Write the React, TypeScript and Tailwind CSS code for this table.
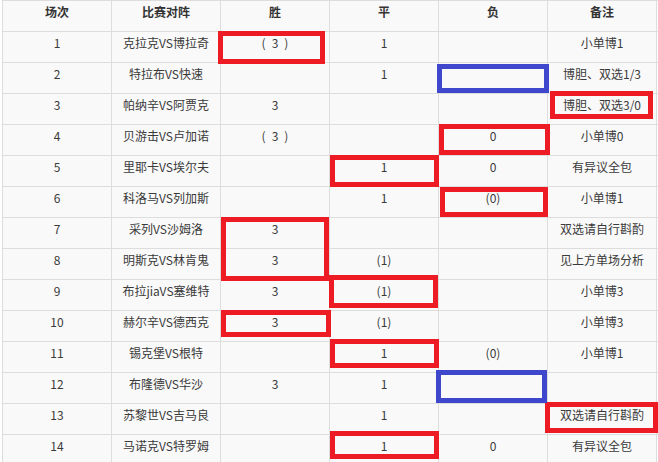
import React from 'react';

interface MatchRow {
  no: string;
  match: string;
  win: string;
  draw: string;
  lose: string;
  note: string;
}

const P3 = '(\u20023\u2002)';

const rows: MatchRow[] = [
  { no: '1', match: '克拉克VS博拉奇', win: P3, draw: '1', lose: '', note: '小单博1' },
  { no: '2', match: '特拉布VS快速', win: '', draw: '1', lose: '', note: '博胆、双选1/3' },
  { no: '3', match: '帕纳辛VS阿贾克', win: '3', draw: '', lose: '', note: '博胆、双选3/0' },
  { no: '4', match: '贝游击VS卢加诺', win: P3, draw: '', lose: '0', note: '小单博0' },
  { no: '5', match: '里耶卡VS埃尔夫', win: '', draw: '1', lose: '0', note: '有异议全包' },
  { no: '6', match: '科洛马VS列加斯', win: '', draw: '1', lose: '(0)', note: '小单博1' },
  { no: '7', match: '采列VS沙姆洛', win: '3', draw: '', lose: '', note: '双选请自行斟酌' },
  { no: '8', match: '明斯克VS林肯鬼', win: '3', draw: '(1)', lose: '', note: '见上方单场分析' },
  { no: '9', match: '布拉jiaVS塞维特', win: '3', draw: '(1)', lose: '', note: '小单博3' },
  { no: '10', match: '赫尔辛VS德西克', win: '3', draw: '(1)', lose: '', note: '小单博3' },
  { no: '11', match: '锡克堡VS根特', win: '', draw: '1', lose: '(0)', note: '小单博1' },
  { no: '12', match: '布隆德VS华沙', win: '3', draw: '1', lose: '', note: '' },
  { no: '13', match: '苏黎世VS吉马良', win: '', draw: '1', lose: '', note: '双选请自行斟酌' },
  { no: '14', match: '马诺克VS特罗姆', win: '', draw: '1', lose: '0', note: '有异议全包' },
];

// annotation boxes drawn over the table: [left, top, width, height]
const redMarks = [
  [218, 31, 107, 33],
  [550, 91, 103, 28],
  [439, 124, 111, 31],
  [330, 155, 109, 32],
  [440, 187, 108, 30],
  [221, 217, 108, 64],
  [329, 275, 109, 33],
  [221, 310, 110, 27],
  [330, 339, 109, 29],
  [545, 402, 113, 31],
  [330, 431, 109, 28],
];

const blueMarks = [
  [437, 64, 112, 29],
  [436, 370, 111, 33],
];

const Cell: React.FC<{ first?: boolean; bold?: boolean; children?: React.ReactNode }> = ({ first, bold, children }) => (
  <div
    className={`${first ? 'w-[110px] border-l' : 'w-[109px]'} shrink-0 border-r border-[#dddddd] bg-[#f9f9f9] pt-[3px] text-center text-[12px] leading-[16px] whitespace-nowrap ${bold ? 'font-bold text-[#333333]' : 'text-[#3a3a3a]'}`}
  >
    {children}
  </div>
);

const App: React.FC = () => {
  return (
    <div
      className="relative h-[462px] w-[658px] overflow-hidden bg-white pl-[2px]"
      style={{ fontFamily: '"Noto Sans CJK SC", "Microsoft YaHei", sans-serif' }}
    >
      {/* Header */}
      <div className="flex h-[32px] border-y border-[#dddddd]">
        <Cell first bold>场次</Cell>
        <Cell bold>比赛对阵</Cell>
        <Cell bold>胜</Cell>
        <Cell bold>平</Cell>
        <Cell bold>负</Cell>
        <Cell bold>备注</Cell>
      </div>

      {rows.map((r) => (
        <div key={r.no} className="flex h-[31px] border-b border-[#dddddd]">
          <Cell first>{r.no}</Cell>
          <Cell>{r.match}</Cell>
          <Cell>{r.win}</Cell>
          <Cell>{r.draw}</Cell>
          <Cell>{r.lose}</Cell>
          <Cell>{r.note}</Cell>
        </div>
      ))}

      {/* Marks */}
      {redMarks.map(([l, t, w, h], i) => (
        <div
          key={`r${i}`}
          className="pointer-events-none absolute border-[5px] border-[#ed1c24]"
          style={{ left: l, top: t, width: w, height: h }}
        />
      ))}
      {blueMarks.map(([l, t, w, h], i) => (
        <div
          key={`b${i}`}
          className="pointer-events-none absolute border-[5px] border-[#3f48cc]"
          style={{ left: l, top: t, width: w, height: h }}
        />
      ))}
    </div>
  );
};

export default App;
